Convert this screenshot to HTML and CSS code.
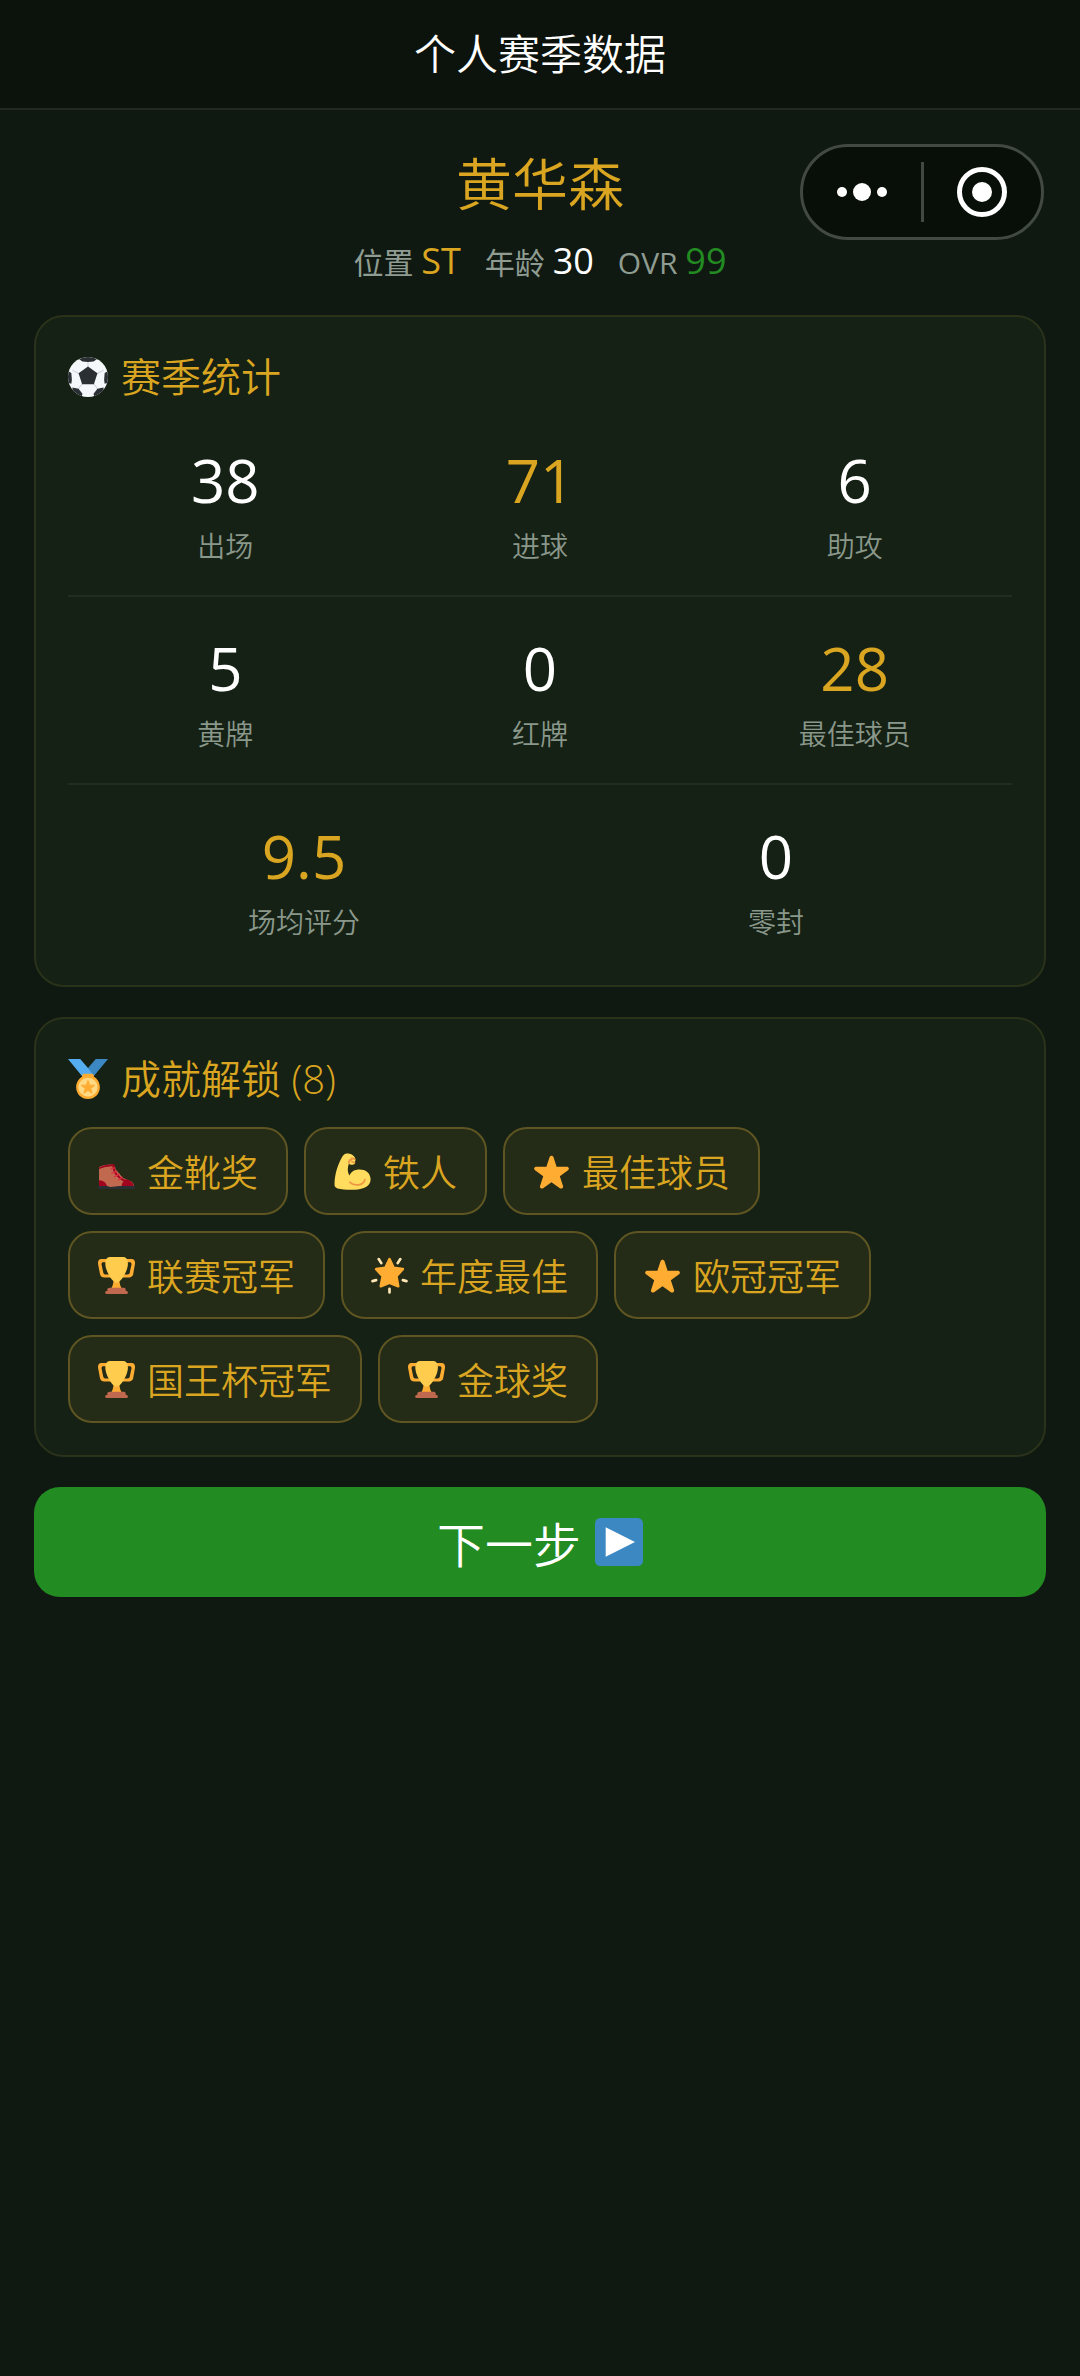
FILE: index.html
```html
<!DOCTYPE html>
<html lang="zh-CN">
<head>
    <meta charset="UTF-8">
    <meta name="viewport" content="width=device-width, initial-scale=1.0">
    <title>个人赛季数据</title>
    <link rel="stylesheet" href="styles.css">
</head>
<body>

    <!-- shared icons -->
    <svg class="sprite" aria-hidden="true">
        <symbol id="icon-ball" viewBox="0 0 36 36">
            <clipPath id="ball-clip"><circle cx="18" cy="18" r="18"/></clipPath>
            <circle cx="18" cy="18" r="18" fill="#f5f8fa"/>
            <g clip-path="url(#ball-clip)">
                <path fill="none" stroke="#ccd6dd" stroke-width="1" d="M18 9V4M10 15L4 12M13 24l-4 5M23 24l4 5M26 15l6-3"/>
                <path fill="#292f33" d="M18 8.500l8.500 6.200L23.300 24.500H12.700L9.500 14.700zM10 2Q18-3 26 2l-3 2-5 .5-5-.5zM-1 12l4 2.500.5 6L3 24l-4-1zM37 12l-4 2.500-.5 6L33 24l4-1zM4 27.500l5.500 1 3.500 4.500-1 4H4zM32 27.500l-5.500 1-3.500 4.500 1 4h8z"/>
            </g>
        </symbol>
        <symbol id="icon-medal" viewBox="0 0 36 36">
            <path fill="#55acee" d="M18 8l-7-8H0l14 17 11.521-4.750z"/>
            <path fill="#3b88c3" d="M25 0l-7 8 5.390 7.312 1.227-1.489L36 0z"/>
            <path fill="#ffac33" d="M23.205 16.026c.080-.217.131-.448.131-.693 0-1.104-.896-2-2-2h-6.667c-1.105 0-2 .896-2 2 0 .245.050.476.131.693-3.258 1.826-5.464 5.307-5.464 9.307C7.335 31.224 12.111 36 18.002 36s10.667-4.776 10.667-10.667c0-4-2.206-7.481-5.464-9.307z"/>
            <circle cx="18" cy="25.333" r="8.500" fill="#ffd983"/>
            <path fill="#ffac33" stroke="#ffac33" stroke-linejoin="round" d="M18 19.500l1.500 4.100 4.300.1-3.400 2.700 1.200 4.200-3.600-2.400-3.600 2.400 1.200-4.200-3.400-2.700 4.300-.1z"/>
        </symbol>
        <symbol id="icon-boot" viewBox="0 0 36 36">
            <path fill="#c1694f" d="M1 13.500q7-3 14-2l2 4 7 8.500 9 4q2 1.500 2 5H1z"/>
            <path fill="#a0041e" d="M1 14q7-3.500 15-3v2q-8-.5-15 2.500zM1 26.500q7 .5 8 6.500H1zM27 25.500q7.500 1.500 8 7.500H23q0-5 4-7.500z"/>
            <path fill="none" stroke="#a0041e" stroke-width="2" d="M15 12q0 6 4 10t7 5"/>
            <path fill="none" stroke="#dd2e44" stroke-width="1.300" stroke-linecap="round" d="M12.500 15.500l4-1M13.500 19.500l4.500-1.500M16 23l4.500-2.500M20 26l3.500-2.500"/>
            <path fill="#292f33" d="M0 32h9l3 1 9-1h15v1.500q0 1.500-2 1.500H1q-1 0-1-1.500z"/>
        </symbol>
        <symbol id="icon-muscle" viewBox="0 0 36 36">
            <path fill="#ffdc5d" d="M12 0.500c-2 .5-3.500 2-4.500 4C4 11 .5 20 .5 30.500c0 2.500 1 3.500 3 4C10 36 23 36.500 29 34c5-2 7-5.500 6.500-9.500-.5-5.500-5-8.500-10.500-8.500-5 0-8.500 2-10 6-2-3.500-2-8-.5-11.500.5.8 2 1 3.500 1 1.800 0 2.500-1 2.200-3 1-1 .8-2 .3-3.500C20 2.500 16 0 12 .5z"/>
            <path fill="none" stroke="#ef9645" stroke-width="1.700" stroke-linecap="round" d="M15.500 28.500c4 4 13 3.500 14.500-2.500M14.500 10c0-2 1-3.500 2.500-3.500M17.500 8.500l2.500 1M17 5l3 1"/>
        </symbol>
        <symbol id="icon-star" viewBox="0 0 36 36">
            <path fill="#ffac33" d="M27.287 34.627c-.404 0-.806-.124-1.152-.371L18 28.422l-8.135 5.834c-.343.249-.744.374-1.147.374-.407 0-.817-.127-1.161-.386-.684-.499-.968-1.378-.708-2.181L9.950 22.587 1.972 16.840c-.683-.499-.968-1.384-.708-2.188.261-.806 1.008-1.353 1.853-1.362l9.941-.014 3.110-9.340c.268-.801 1.018-1.341 1.862-1.341.843 0 1.593.540 1.861 1.341l3.051 9.340 10.002.014c.847.009 1.594.556 1.854 1.362.261.804-.024 1.689-.708 2.188l-7.979 5.747 3.102 9.476c.260.803-.024 1.682-.708 2.181-.345.258-.754.383-1.218.383z"/>
        </symbol>
        <symbol id="icon-glow" viewBox="0 0 36 36">
            <path fill="none" stroke="#ffe8b6" stroke-width="2.600" stroke-linecap="round" d="M7.500 2l2.500 4M28.500 2l-2.500 4M1.500 23.500l3.500-1M34.500 23.500l-3.500-1M18 31v3.500"/>
            <path fill="#ffac33" stroke="#ffac33" stroke-width="2.500" stroke-linejoin="round" d="M18 2l4 8.500 9 1.300-6.300 6.700L26.500 28.500l-8.500-3.500-8.500 3.500 1.800-10L5 11.800l9-1.300z"/>
        </symbol>
        <symbol id="icon-trophy" viewBox="0 0 36 36">
            <path fill="#ffac33" d="M5.123 5h6C12.227 5 13 4.896 13 6V4c0-1.104-.773-2-1.877-2h-8c-2 0-3.583 2.125-3 5 0 0 1.791 9.375 1.917 9.958C2.373 18.500 4.164 20 6.081 20h6.958c1.105 0-.039-1.896-.039-3v-2c0 1.104-.773 2-1.877 2h-4c-1.104 0-1.833-1.042-2-2S3.539 7.667 3.539 7.667C3.206 5.750 4.018 5 5.123 5zm25.812 0h-6C23.831 5 22 4.896 22 6V4c0-1.104 1.831-2 2.935-2h8c2 0 3.584 2.125 3 5 0 0-1.633 9.419-1.771 10-.354 1.500-2.042 3-4 3h-7.146C21.914 20 22 18.104 22 17v-2c0 1.104 1.831 2 2.935 2h4c1.104 0 1.834-1.042 2-2s1.584-7.333 1.584-7.333C32.851 5.750 32.040 5 30.935 5zM20.832 22c0-6.958-2.709 0-2.709 0s-3-6.958-3 0-3.291 10-3.291 10h12.292c-.001 0-3.292-3.042-3.292-10z"/>
            <path fill="#ffcc4d" d="M29.123 6.577c0 6.775-6.770 18.423-11 18.423-4.231 0-11-11.649-11-18.423 0-5.774 2.770-6.577 5-6.577 1.125 0 3.445.081 6 .081 2.555 0 4.965-.081 6-.081 2.230 0 5 .804 5 6.577z"/>
            <path fill="#c1694f" d="M27 33c0 1.104.227 2-.877 2h-16C9.018 35 9 34.104 9 33v-1c0-1.104 1.164-2 2.206-2h13.917c1.042 0 1.877.896 1.877 2v1z"/>
            <path fill="#c1694f" d="M29 34.625c0 .760.165 1.375-1.252 1.375H8.498C7.206 36 7 35.385 7 34.625v-.250C7 33.615 7.738 33 8.498 33h19.250c.759 0 1.252.615 1.252 1.375v.250z"/>
        </symbol>
        <symbol id="icon-play" viewBox="0 0 36 36">
            <rect width="36" height="36" rx="4" fill="#3b88c3"/>
            <path fill="#fff" d="M8 7l22 11L8 29z"/>
        </symbol>
    </svg>

    <header class="navbar">
        <h1>个人赛季数据</h1>
    </header>

    <div class="capsule">
        <button type="button" aria-label="更多">
            <svg width="50" height="50" viewBox="0 0 50 50" fill="#fff">
                <circle cx="5" cy="25" r="5"/>
                <circle cx="25" cy="25" r="9"/>
                <circle cx="45" cy="25" r="5"/>
            </svg>
        </button>
        <button type="button" aria-label="关闭">
            <svg width="50" height="50" viewBox="0 0 50 50">
                <circle cx="25" cy="25" r="22.500" fill="none" stroke="#fff" stroke-width="5"/>
                <circle cx="25" cy="25" r="10" fill="#fff"/>
            </svg>
        </button>
    </div>

    <main>
        <section class="player">
            <h2>黄华森</h2>
            <ul class="player-info">
                <li>位置 <b class="gold">ST</b></li>
                <li>年龄 <b>30</b></li>
                <li>OVR <b class="green">99</b></li>
            </ul>
        </section>

        <section class="card">
            <h3><svg class="icon"><use href="#icon-ball"/></svg>赛季统计</h3>
            <div class="stat-row">
                <div class="stat"><span class="value">38</span><span class="label">出场</span></div>
                <div class="stat"><span class="value gold">71</span><span class="label">进球</span></div>
                <div class="stat"><span class="value">6</span><span class="label">助攻</span></div>
            </div>
            <div class="stat-row">
                <div class="stat"><span class="value">5</span><span class="label">黄牌</span></div>
                <div class="stat"><span class="value">0</span><span class="label">红牌</span></div>
                <div class="stat"><span class="value gold">28</span><span class="label">最佳球员</span></div>
            </div>
            <div class="stat-row">
                <div class="stat"><span class="value gold">9.5</span><span class="label">场均评分</span></div>
                <div class="stat"><span class="value">0</span><span class="label">零封</span></div>
            </div>
        </section>

        <section class="card">
            <h3><svg class="icon"><use href="#icon-medal"/></svg>成就解锁 (8)</h3>
            <ul class="badges">
                <li><svg class="icon"><use href="#icon-boot"/></svg>金靴奖</li>
                <li><svg class="icon"><use href="#icon-muscle"/></svg>铁人</li>
                <li><svg class="icon"><use href="#icon-star"/></svg>最佳球员</li>
                <li><svg class="icon"><use href="#icon-trophy"/></svg>联赛冠军</li>
                <li><svg class="icon"><use href="#icon-glow"/></svg>年度最佳</li>
                <li><svg class="icon"><use href="#icon-star"/></svg>欧冠冠军</li>
                <li><svg class="icon"><use href="#icon-trophy"/></svg>国王杯冠军</li>
                <li><svg class="icon"><use href="#icon-trophy"/></svg>金球奖</li>
            </ul>
        </section>

        <button type="button" class="next-button">下一步<svg class="icon"><use href="#icon-play"/></svg></button>
    </main>

</body>
</html>
```

FILE: styles.css
```css
* {
    box-sizing: border-box;
}
body {
    font-family: "Open Sans", "Noto Sans CJK SC", sans-serif;
    font-weight: 350;
    margin: 0;
    min-height: 100vh;
    background-color: #101911;
    color: #fff;
}
h1, h2, h3, ul {
    margin: 0;
    padding: 0;
    font-weight: inherit;
    list-style: none;
}
button {
    font: inherit;
    color: inherit;
    border: none;
    cursor: pointer;
}
.sprite {
    position: absolute;
    width: 0;
    height: 0;
}
.icon {
    width: 1em;
    height: 1em;
    flex: none;
}
.gold {
    color: #daa520;
}
.green {
    color: #228b22;
}
.navbar {
    height: 110px;
    display: flex;
    align-items: center;
    justify-content: center;
    background-color: #0c120c;
    border-bottom: 2px solid #222a22;
}
.navbar h1 {
    font-size: 42px;
    line-height: 60px;
}
/* floating mini program menu */
.capsule {
    position: absolute;
    top: 144px;
    right: 36px;
    width: 244px;
    height: 96px;
    display: flex;
    align-items: center;
    background-color: #080e08;
    border: 3px solid #424842;
    border-radius: 48px;
}
.capsule button {
    flex: 1;
    height: 60px;
    padding: 0;
    display: flex;
    align-items: center;
    justify-content: center;
    background: none;
}
.capsule button + button {
    border-left: 3px solid #424842;
}
main {
    padding: 38px 34px;
    display: flex;
    flex-direction: column;
    gap: 30px;
}
.player {
    text-align: center;
}
.player h2 {
    color: #daa520;
    font-size: 56px;
    line-height: 70px;
}
.player-info {
    display: flex;
    align-items: baseline;
    justify-content: center;
    gap: 24px;
    margin-top: 20px;
    color: #8f9c91;
    font-size: 30px;
    font-weight: 400;
    line-height: 45px;
}
.player-info li {
    white-space: nowrap;
}
.player-info b {
    font-size: 36px;
    font-weight: inherit;
}
.player-info b:not([class]) {
    color: #fff;
}
.card {
    padding: 32px;
    background-color: #142114;
    border: 2px solid #2a321a;
    border-radius: 30px;
}
.card h3 {
    display: flex;
    align-items: center;
    gap: 13px;
    color: #daa520;
    font-size: 40px;
    line-height: 56px;
}
.stat-row {
    display: flex;
    padding: 34px 0 30px;
    text-align: center;
}
h3 + .stat-row {
    margin-top: 4px;
}
.stat-row + .stat-row {
    border-top: 2px solid #222d22;
}
.stat-row:last-child {
    padding-bottom: 12px;
}
.stat {
    flex: 1;
}
.value, .label {
    display: block;
}
.value {
    font-size: 60px;
    font-weight: 400;
    line-height: 74px;
}
.label {
    margin-top: 10px;
    color: #8a978b;
    font-size: 28px;
    line-height: 38px;
}
.badges {
    display: flex;
    flex-wrap: wrap;
    gap: 16px;
    margin-top: 20px;
}
.badges li {
    display: flex;
    align-items: center;
    gap: 12px;
    height: 88px;
    padding: 0 28px;
    color: #daa520;
    background-color: #242b16;
    border: 2px solid #5e5522;
    border-radius: 24px;
    font-size: 37px;
}
.next-button {
    display: flex;
    align-items: center;
    justify-content: center;
    gap: 14px;
    height: 110px;
    background-color: #228b22;
    border-radius: 26px;
    font-size: 48px;
}
```
